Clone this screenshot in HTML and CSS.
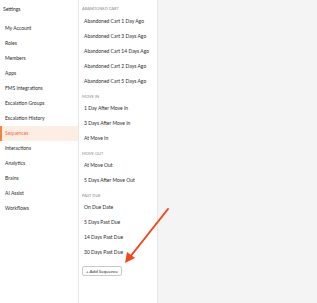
FILE: index.html
```html
<!DOCTYPE html>
<html lang="en">
<head>
  <meta charset="UTF-8">
  <meta name="viewport" content="width=device-width, initial-scale=1.0">
  <title>Settings - Sequences</title>

  <link rel="stylesheet" href="styles.css">
</head>
<body>
  <div class="settings">
    <nav class="settings-nav">
      <div class="settings-nav__title">Settings</div>
      <ul class="settings-nav__list">
        <li class="settings-nav__item">My Account</li>
        <li class="settings-nav__item">Roles</li>
        <li class="settings-nav__item">Members</li>
        <li class="settings-nav__item">Apps</li>
        <li class="settings-nav__item">FMS Integrations</li>
        <li class="settings-nav__item">Escalation Groups</li>
        <li class="settings-nav__item">Escalation History</li>
        <li class="settings-nav__item settings-nav__item--active">Sequences</li>
        <li class="settings-nav__item">Interactions</li>
        <li class="settings-nav__item">Analytics</li>
        <li class="settings-nav__item">Brains</li>
        <li class="settings-nav__item">AI Assist</li>
        <li class="settings-nav__item">Workflows</li>
      </ul>
    </nav>

    <section class="sequence-list">
      <div class="sequence-group">
        <h3 class="sequence-group__title">Abandoned Cart</h3>
        <div class="sequence-group__item">Abandoned Cart 1 Day Ago</div>
        <div class="sequence-group__item">Abandoned Cart 3 Days Ago</div>
        <div class="sequence-group__item">Abandoned Cart 14 Days Ago</div>
        <div class="sequence-group__item">Abandoned Cart 2 Days Ago</div>
        <div class="sequence-group__item">Abandoned Cart 5 Days Ago</div>
      </div>

      <div class="sequence-group">
        <h3 class="sequence-group__title">Move In</h3>
        <div class="sequence-group__item">1 Day After Move In</div>
        <div class="sequence-group__item">3 Days After Move In</div>
        <div class="sequence-group__item">At Move In</div>
      </div>

      <div class="sequence-group">
        <h3 class="sequence-group__title">Move Out</h3>
        <div class="sequence-group__item">At Move Out</div>
        <div class="sequence-group__item">5 Days After Move Out</div>
      </div>

      <div class="sequence-group">
        <h3 class="sequence-group__title">Past Due</h3>
        <div class="sequence-group__item">On Due Date</div>
        <div class="sequence-group__item">5 Days Past Due</div>
        <div class="sequence-group__item">14 Days Past Due</div>
        <div class="sequence-group__item">30 Days Past Due</div>
      </div>

      <button class="add-sequence" type="button">+ Add Sequence</button>
    </section>

    <main class="sequence-detail"></main>
  </div>

  <!-- annotation arrow pointing at the add button -->
  <svg class="callout-arrow" width="317" height="303" viewBox="0 0 317 303">
    <line x1="168" y1="209" x2="130" y2="257" stroke="#f4471c" stroke-width="2" stroke-linecap="round"/>
    <polygon points="125,263 127,252 135,258" fill="#f4471c"/>
  </svg>
</body>
</html>
```

FILE: styles.css
```css
body, html {
  margin: 0;
  height: 100%;
  font-family: Lato, "Open Sans", sans-serif;
  color: #2b2b2b;
}

.settings {
  display: flex;
  height: 100%;
}

.settings-nav {
  width: 78px;
  flex: none;
  border-right: 1px solid #e6e6e6;
  background: white;
}

.settings-nav__title {
  font-size: 5px;
  line-height: 5px;
  padding: 7px 3px 0;
  height: 16px;
  box-sizing: border-box;
  margin-bottom: 5px;
}

.settings-nav__list {
  list-style: none;
  margin: 0;
  padding: 0;
}

.settings-nav__item {
  height: 15px;
  line-height: 15px;
  font-size: 5px;
  padding-left: 5px;
  white-space: nowrap;
}

.settings-nav__item--active {
  background: #fdeee5;
  color: #f2703e;
  box-shadow: inset 2px 0 0 #f5823f;
}

.sequence-list {
  width: 78px;
  flex: none;
  border-right: 1px solid #e6e6e6;
  background: white;
}

.sequence-group__title {
  margin: 0;
  font-size: 4px;
  line-height: 4px;
  font-weight: normal;
  text-transform: uppercase;
  color: #8a8a8a;
  padding: 6px 3px 2px;
}

.sequence-group:first-child .sequence-group__title {
  padding-top: 7px;
  padding-bottom: 3px;
}

.sequence-group__item {
  height: 15px;
  line-height: 15px;
  font-size: 5px;
  padding-left: 5px;
  white-space: nowrap;
}

.add-sequence {
  display: block;
  margin: 6px 0 0 3px;
  height: 10px;
  padding: 0 3px;
  font-family: inherit;
  font-size: 4.5px;
  color: #2b2b2b;
  background: white;
  border: 1px solid #c8c8c8;
  border-radius: 2px;
}

.sequence-detail {
  flex: 1;
  background: #f4f4f4;
}

.callout-arrow {
  position: absolute;
  left: 0;
  top: 0;
  pointer-events: none;
}
```
